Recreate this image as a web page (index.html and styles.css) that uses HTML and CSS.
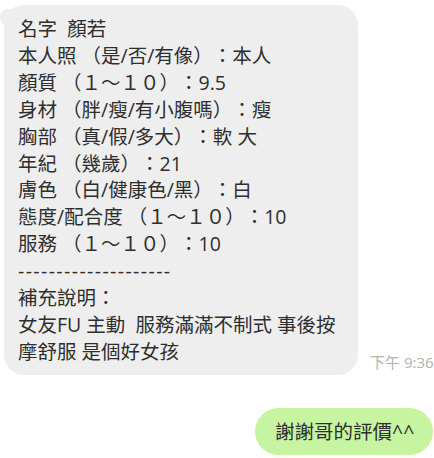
FILE: index.html
```html
<!DOCTYPE html>
<html lang="zh-Hant">
<head>
    <meta charset="UTF-8">
    <meta name="viewport" content="width=device-width, initial-scale=1.0">
    <title>聊天</title>
    <link rel="stylesheet" href="styles.css">
</head>
<body>
    <div class="chat">
        <!-- 對方訊息 -->
        <div class="row row-in">
            <div class="bubble bubble-in">
                名字&nbsp;&nbsp;顏若<br>
                本人照 （是/否/有像）：本人<br>
                顏質 （１～１０）：9.5<br>
                身材 （胖/瘦/有小腹嗎）：瘦<br>
                胸部 （真/假/多大）：軟 大<br>
                年紀 （幾歲）：21<br>
                膚色 （白/健康色/黑）：白<br>
                態度/配合度 （１～１０）：10<br>
                服務 （１～１０）：10<br>
                <span class="dash">--------------------</span><br>
                補充說明：<br>
                女友FU 主動&nbsp;&nbsp;服務滿滿不制式 事後按<br>
                摩舒服 是個好女孩
            </div>
            <span class="time">下午 9:36</span>
        </div>

        <!-- 自己的訊息 -->
        <div class="row row-out">
            <div class="bubble bubble-out">謝謝哥的評價^^</div>
        </div>
    </div>
</body>
</html>
```

FILE: styles.css
```css
/* 基本設定 */
html, body {
    margin: 0;
    overflow: hidden;
    background: #fff;
}

body {
    font-family: "Open Sans", "Noto Sans CJK TC", sans-serif;
    color: #2e2e2e;
    width: 434px;
    height: 458px;
    text-spacing-trim: space-all;
}

.chat {
    display: flex;
    flex-direction: column;
}

.row {
    display: flex;
    align-items: flex-end;
}

.row-in {
    padding: 5px 0 0 4px;
}

.row-out {
    justify-content: flex-end;
    margin-top: 33px;
    padding-right: 1px;
}

/* 對話框 */
.bubble {
    font-size: 19.5px;
    position: relative;
    white-space: nowrap;
}

.bubble-in {
    box-sizing: border-box;
    width: 354px;
    background: #eeeeee;
    border-radius: 20px;
    padding: 11px 10px 9px 14px;
    line-height: 26.9px;
}

/* 左上角的小尾巴 */
.bubble-in::before {
    content: "";
    position: absolute;
    left: -4px;
    top: 4px;
    width: 22px;
    height: 18px;
    background: #eeeeee;
    border-radius: 10px 0 0 12px;
}

.dash {
    letter-spacing: 1.4px;
}

.bubble-out {
    background: #c6f4a1;
    border-radius: 24px;
    height: 47px;
    line-height: 47px;
    padding: 0 16px 0 20px;
    box-sizing: border-box;
    width: 178px;
}

.time {
    font-size: 15px;
    color: #b2b2b2;
    margin-left: 12px;
    margin-bottom: 3px;
    white-space: nowrap;
}
```
